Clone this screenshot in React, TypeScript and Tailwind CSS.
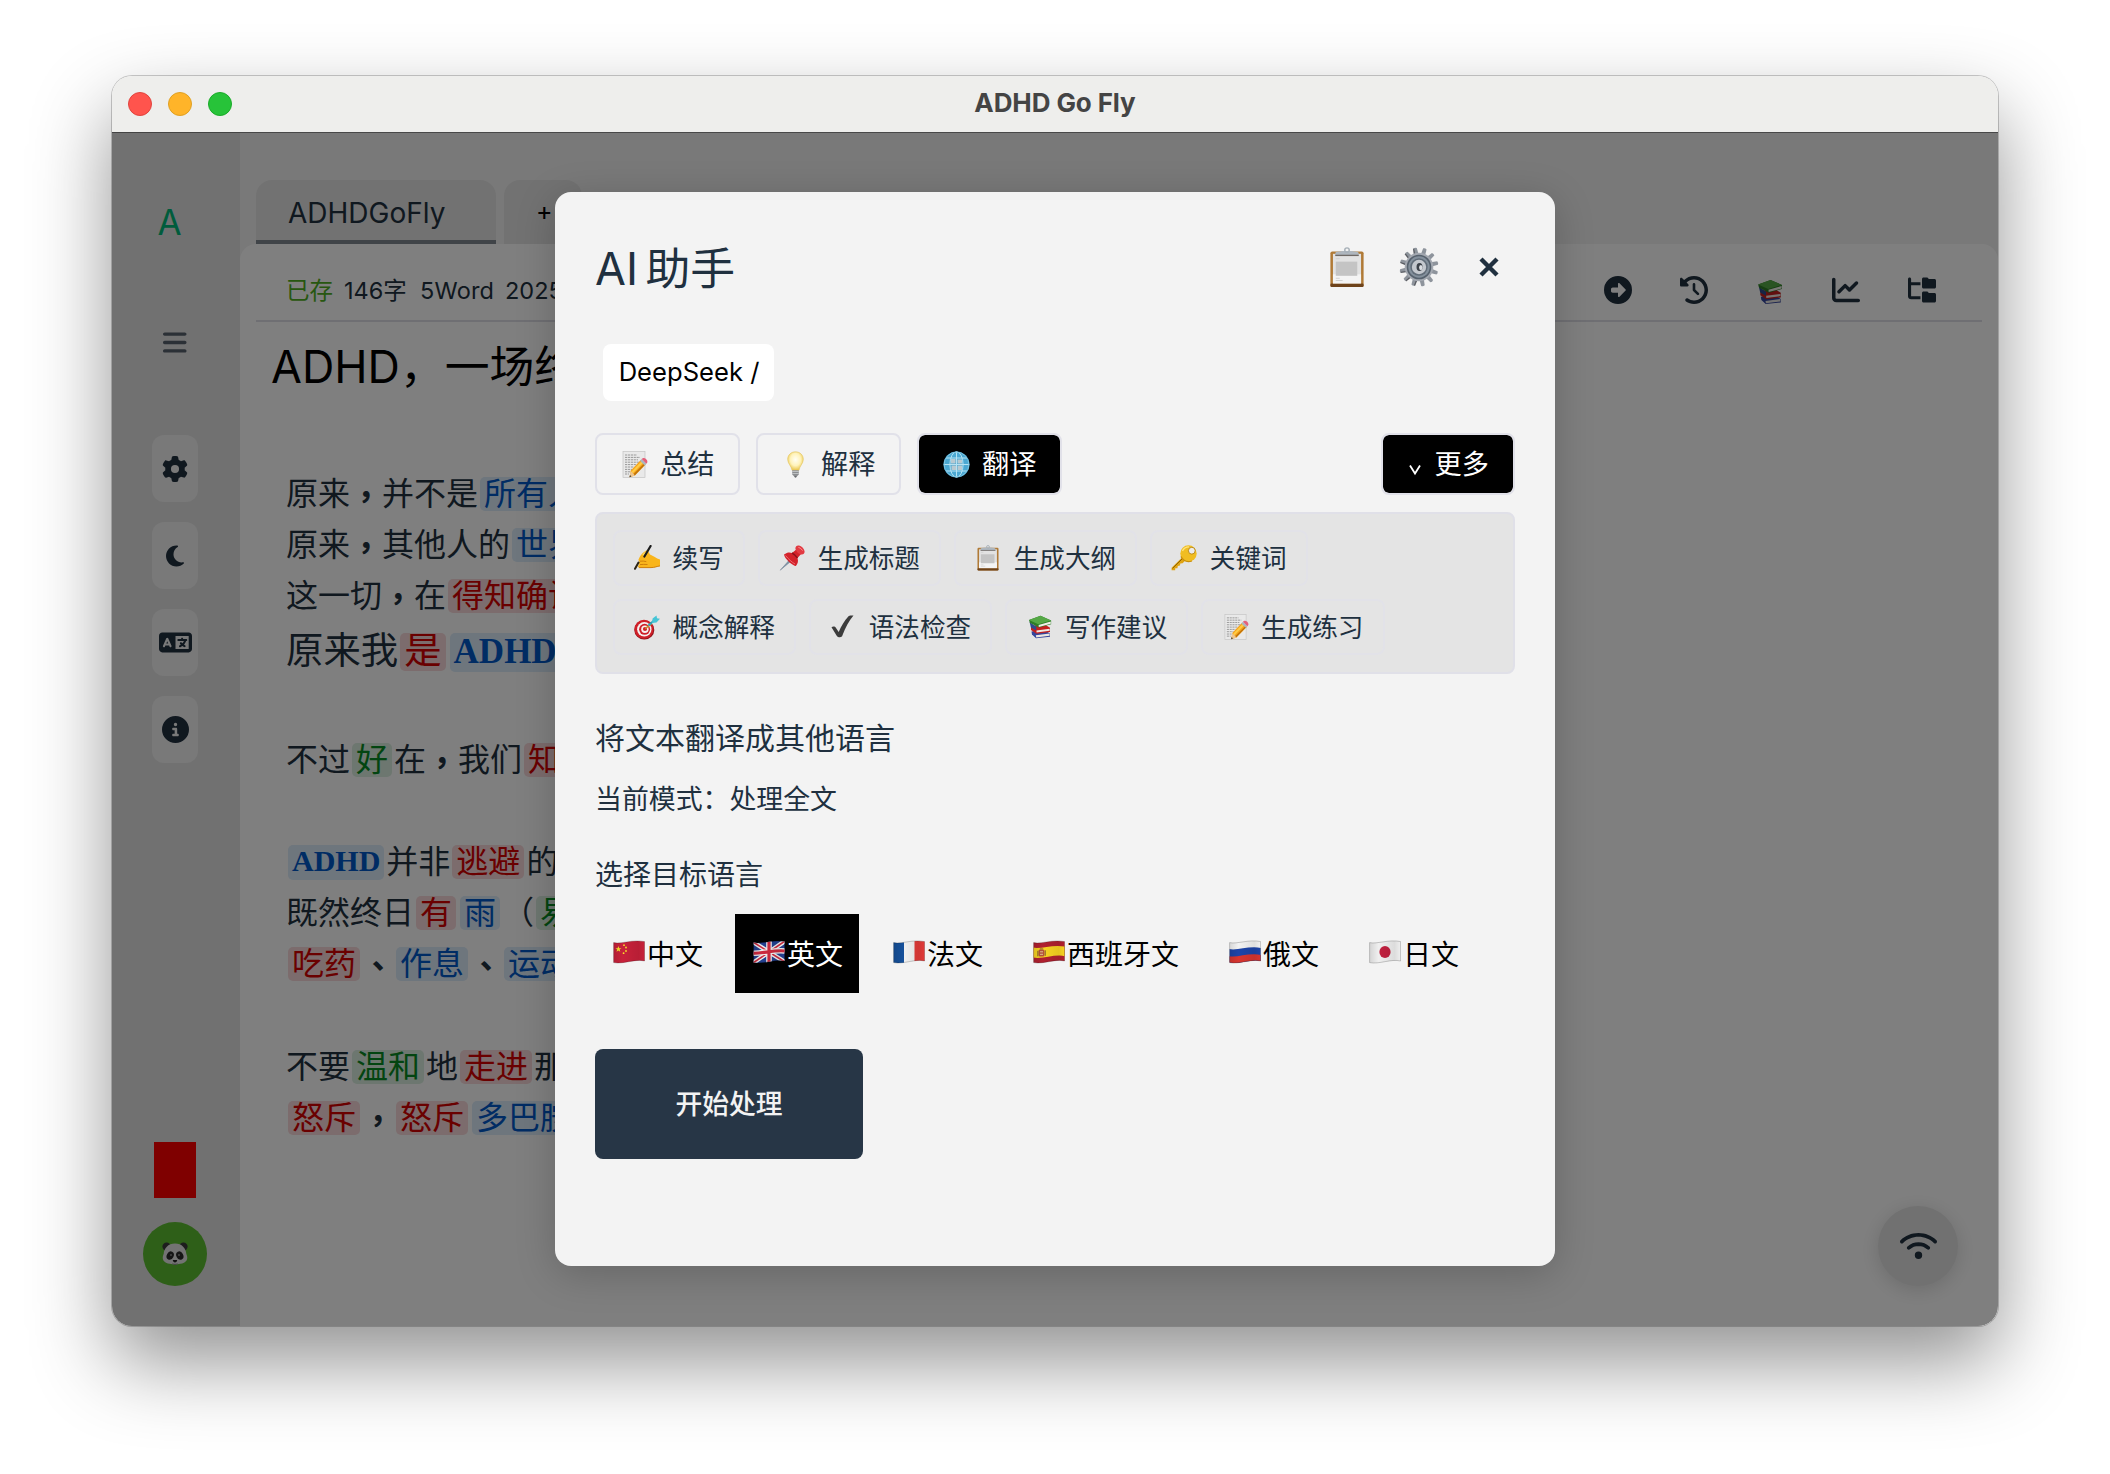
import React from "react";
import {
  FaBars,
  FaChartLine,
  FaCircleInfo,
  FaCircleRight,
  FaClockRotateLeft,
  FaFolderTree,
  FaGear,
  FaLanguage,
  FaMoon,
  FaWifi,
} from "react-icons/fa6";

type IconProps = { className?: string };

const MemoIcon = ({ className }: IconProps) => (
  <svg viewBox="0 0 27 27" className={className}>
    <rect x="2" y="0.6" width="22" height="25.8" fill="#e9e9e9" stroke="#c4c4c4" strokeWidth="0.7" />
    <path
      d="M4 4h12M4 6.4h15M4 8.8h13M4 11.2h15M4 13.6h11M4 16h9M4 18.4h7M4 20.8h5M4 23h4"
      stroke="#989898"
      strokeWidth="1"
      strokeDasharray="2.2 0.7"
    />
    <path d="M9.600 19.800 19.800 9l4.800 4.600-10.600 10.800-5.400 1.800z" fill="#f5a31a" />
    <path d="M10.600 20.600 20.800 9.900l1.600 1.500-10.700 11z" fill="#ffcb45" />
    <path d="m13.600 24.500 10.700-10.900-1.100-1-11 10.900z" fill="#c0720a" />
    <path d="m19 9.800 1.700-1.700 4.700 4.600-1.700 1.700z" fill="#aab6be" />
    <path d="m20.700 8.100 1-.8c2-1.200 5.600 2 4.500 4.200l-.8 1.200z" fill="#e4607a" />
    <path d="m9.600 19.800 4.400 4.600-5.400 1.800z" fill="#edc58f" />
    <path d="m9 24 1.300 1.500-1.900.8z" fill="#333" />
  </svg>
);

const BulbIcon = ({ className }: IconProps) => (
  <svg viewBox="0 0 27 27" className={className}>
    <defs>
      <radialGradient id="bulb-glass" cx="0.5" cy="0.42" r="0.55">
        <stop offset="0" stopColor="#fffef4" />
        <stop offset="0.6" stopColor="#fff3bb" />
        <stop offset="1" stopColor="#eccb58" />
      </radialGradient>
    </defs>
    <path
      d="M13.500.8c4.500 0 7.800 3.300 7.800 7.500 0 4.400-3.600 6.300-4.300 11H10c-.7-4.700-4.300-6.600-4.300-11C5.700 4.100 9 .8 13.500.8z"
      fill="url(#bulb-glass)"
      stroke="#e3c45e"
      strokeWidth="0.6"
    />
    <path d="M10.200 19.300h6.600v4.200l-1.800 1.800h-3l-1.800-1.800z" fill="#8b8d90" />
    <path d="M10.200 20.500h6.600M10.200 22.500h6.600" stroke="#c9cbce" strokeWidth="0.8" />
    <path d="M12 25.200h3l-1 1.300h-1z" fill="#45474a" />
  </svg>
);

const GlobeIcon = ({ className }: IconProps) => (
  <svg viewBox="0 0 27 27" className={className}>
    <circle cx="13.500" cy="13.500" r="13" fill="#3f9cc9" />
    <circle cx="13.500" cy="13.500" r="12" fill="#4ba8d2" />
    <path
      d="M8 8h4.500v4.500H8zM8.500 14.500h4.500v4.500H8.500zM14.500 8.500h4.500v4h-4.500zM14.500 14.500h4.500v4.500h-4.500z"
      fill="#c4ccd0"
      opacity="0.9"
    />
    <g fill="none" stroke="#b5e2f3" strokeWidth="1">
      <path d="M13.500.8v25.400M.8 13.500h25.400M3 7h21M3 20h21" />
      <ellipse cx="13.500" cy="13.500" rx="6.600" ry="12.700" />
      <circle cx="13.500" cy="13.500" r="12.400" stroke="#7fc6e2" />
    </g>
  </svg>
);

const ClipboardIcon = ({ className }: IconProps) => (
  <svg viewBox="0 0 36 42" className={className}>
    <rect x="1" y="4.500" width="34" height="36.500" rx="1.800" fill="#b07a36" />
    <rect x="1" y="37.500" width="34" height="3.500" rx="1.200" fill="#6e431b" />
    <rect x="3.600" y="7" width="28.800" height="30.300" fill="#e2e2e2" />
    <rect x="3.600" y="28" width="28.800" height="9.300" fill="#f4f4f4" />
    <rect x="6.500" y="15" width="22" height="14.500" fill="#c4c4c4" />
    <path d="M6.500 12h4M6.500 32h4M6.500 34.300h7" stroke="#cfcfcf" strokeWidth="1" />
    <path d="M6 6.500c0-2 3.500-1.800 7-2.500h10c3.500.7 7 .5 7 2.500V9H6z" fill="#aeb6be" />
    <path d="M6 8h24v1.300H6z" fill="#6f6a66" />
    <circle cx="18" cy="3.200" r="2.300" fill="none" stroke="#a7b0b8" strokeWidth="1.500" />
  </svg>
);

const GearEmoji = ({ className }: IconProps) => (
  <svg viewBox="0 0 40 40" className={className}>
    <g fill="#8e949c">
      {[0, 30, 60, 90, 120, 150, 180, 210, 240, 270, 300, 330].map((angle) => (
        <path key={angle} d="M17.800 7.500 18.200 1q1.800-1.200 3.600 0l.4 6.500z" transform={`rotate(${angle + 18} 20 20)`} />
      ))}
    </g>
    <g fill="#3d3f45" opacity="0.7">
      {[180, 210, 240, 270, 300, 330].map((angle) => (
        <path key={angle} d="M17.400 6.500 17.900.8l1.200.2-.3 6z" transform={`rotate(${angle + 18} 20 20)`} />
      ))}
    </g>
    <circle cx="20" cy="20" r="14.300" fill="#a3a8b0" />
    <circle cx="20" cy="20" r="12.300" fill="#56616d" />
    <circle cx="20" cy="20" r="10.700" fill="#84909c" />
    <circle cx="20" cy="20" r="8.700" fill="#616c78" />
    <circle cx="20" cy="20" r="7.200" fill="#c4c8ce" />
    <ellipse cx="20.500" cy="20" rx="3" ry="4" fill="#3d4249" />
    <ellipse cx="21.800" cy="20.600" rx="1.700" ry="2.600" fill="#dcdfe3" />
  </svg>
);

const WritingHandIcon = ({ className }: IconProps) => (
  <svg viewBox="0 0 26 26" className={className}>
    <path
      d="M4.500 14.500C6 11 9 6.500 13.500 5l2.500 4.500c3.500 1.200 6 4 10 5v6.500c-3 .6-5 2-9 1.800H5.500C3 22.500 4 20 6 19.600c-2.600 0-2.500-3-.2-3.400-1 0-1.500-.8-1.300-1.700z"
      fill="#f9b51b"
    />
    <path
      d="M6 19.600c2.500-.2 5-.4 7.500-.1M5.800 16.200c2.500-.3 4.500-.2 6.500.4M5 22.600h12c3.500 0 6-1.300 9-1.700"
      stroke="#c97908"
      strokeWidth="0.900"
      fill="none"
    />
    <path d="M9 10c2-2.500 4-3.800 5.500-3.500" stroke="#ffd95e" strokeWidth="1.600" fill="none" />
    <path d="m16.600 1-6.200 10.500" stroke="#1c1c1c" strokeWidth="2.200" strokeLinecap="round" />
    <path d="M4.500 17.500 1 23.800" stroke="#2c2416" strokeWidth="2" strokeLinecap="round" />
  </svg>
);

const PinIcon = ({ className }: IconProps) => (
  <svg viewBox="0 0 26 26" className={className}>
    <path d="m10.500 14.800 1.500 1.400L1.200 25.200z" fill="#8195a6" stroke="#6c7f90" strokeWidth="0.500" />
    <path
      d="M5 9.500c3-2.200 5.500-2.500 8-1.500l5.500-4.500 4.500 4.500-4.500 5c1 3 .5 5.500-1.600 8C14 21 5.500 14 5 9.500z"
      fill="#d3222b"
    />
    <path d="M13 8c2 1 4 3 5.500 5" stroke="#8d1119" strokeWidth="1.400" fill="none" />
    <ellipse cx="21" cy="5" rx="5.400" ry="3.600" transform="rotate(45 21 5)" fill="#e23a42" />
    <path d="M6.500 10.500c3 3.500 6 6.500 9.500 8.500" stroke="#f06a6f" strokeWidth="1" fill="none" />
    <path d="M19.500 2.500c1.500.3 3 1.500 4 3" stroke="#ff9a9a" strokeWidth="1" fill="none" />
  </svg>
);

const KeyIcon = ({ className }: IconProps) => (
  <svg viewBox="0 0 26 26" className={className}>
    <path d="M11.500 12 .6 22.700v2.500h3.600v-2h2.200l.4-2.300 2.200-.3.300-2.200 2.300-.2 3.500-3.400z" fill="#e0a412" />
    <path d="M1.500 23.400 12 13" stroke="#8a5f05" strokeWidth="1" />
    <circle cx="17.500" cy="8.500" r="8.200" fill="#f0bd22" />
    <path d="M10 11.500c2 4 6 6 11 4.500" stroke="#c98f0c" strokeWidth="1.300" fill="none" />
    <circle cx="20.800" cy="5.700" r="3.400" fill="#ececec" stroke="#b98509" strokeWidth="0.900" />
    <path d="M11.500 6C12.500 3.500 15 1.800 18 1.800" stroke="#ffe47c" strokeWidth="1.300" fill="none" />
  </svg>
);

const TargetIcon = ({ className }: IconProps) => (
  <svg viewBox="0 0 26 26" className={className}>
    <ellipse cx="10.300" cy="15.900" rx="10" ry="9.600" fill="#8f1219" />
    <circle cx="10" cy="15.200" r="9.500" fill="#cf2029" />
    <circle cx="10.300" cy="15.300" r="7.200" fill="#f5f1f0" />
    <circle cx="10.600" cy="15.300" r="5.500" fill="#cf2029" />
    <circle cx="10.900" cy="15.200" r="3.700" fill="#f5f1f0" />
    <circle cx="11" cy="15" r="2.100" fill="#cf2029" />
    <path d="m11.300 14.600 6.500-5.300" stroke="#c98d2b" strokeWidth="1.500" />
    <path d="m14.500 11.500 6-5.500" stroke="#2aa5b8" strokeWidth="2" />
    <path d="m18 9 .6-4.500L22.500 1.500l.5 2.700 3 .6-3.500 3.700z" fill="#46c5d6" />
  </svg>
);

const CheckIcon = ({ className }: IconProps) => (
  <svg viewBox="0 0 26 26" className={className}>
    <path
      d="M1.500 13.200c1.500-1 3.600-.8 4.500.7l2.700 4c2.700-6 5.800-11.500 9.600-15.500.7-.8 1.700-1 2.800-1l2.400.2c-4.500 5.600-8.200 12-11 19.700-.5 1.500-1.300 1.900-2.600 1.900s-2.500-.1-3.200-1.500z"
      fill="#3c3c3c"
    />
  </svg>
);

const BooksIcon = ({ className }: IconProps) => (
  <svg viewBox="0 0 26 26" className={className}>
    <path d="m4.500 17.500 12-2 6.500 4v3.200L9 24.200 5 20.500z" fill="#34459c" />
    <path d="m8.800 21.300 13.800-1.800v2.300l-13.400 1.700z" fill="#e9e6e2" />
    <path d="m4 12 13-2 6 3.700v4.300L9.500 19.800 4 16z" fill="#c4201f" />
    <path d="m9.400 16.400 13.300-1.600v2l-13.100 1.700z" fill="#efe9e3" />
    <path d="m2.600 8 1.300 5.500 5.400 3v-3.700z" fill="#2d4a8d" />
    <path d="m2 6 11.500-4.200 10.600 4.600v3.800l-12.300 3.400-9-4.800z" fill="#2d7d27" />
    <path d="m2 6 11.500-4.200 10.600 4.600-12.800 3.900z" fill="#55a846" />
    <path d="m11.600 11 12.200-3.500v2.200l-12 3.300z" fill="#f1eee9" />
  </svg>
);

const PandaIcon = ({ className }: IconProps) => (
  <svg viewBox="0 0 26 24" className={className}>
    <circle cx="4.600" cy="4.600" r="4.200" fill="#3b3b3b" />
    <circle cx="21.400" cy="4.600" r="4.200" fill="#3b3b3b" />
    <path
      d="M13 1.500c7 0 11 5 11.300 10.300 2 4.500.8 7.500-2.300 9-2.500 1.200-5 1.200-6.500 1.500-1.600.8-3.400.8-5 0-1.500-.3-4-.3-6.500-1.500-3.100-1.500-4.300-4.500-2.300-9C2 6.500 6 1.500 13 1.500z"
      fill="#e6e6e6"
    />
    <ellipse cx="8.200" cy="13.600" rx="3.400" ry="4.300" transform="rotate(28 8.200 13.600)" fill="#2b2b2b" />
    <ellipse cx="17.800" cy="13.600" rx="3.400" ry="4.300" transform="rotate(-28 17.800 13.600)" fill="#2b2b2b" />
    <circle cx="9" cy="13" r="1" fill="#8d8d8d" />
    <circle cx="17" cy="13" r="1" fill="#8d8d8d" />
    <path d="M10.800 18h4.400c0 1.600-1.200 2.400-2.200 2.400s-2.200-.8-2.200-2.400z" fill="#222" />
    <path d="M10.500 21.800c1.500.8 3.500.8 5 0" stroke="#666" strokeWidth="0.800" fill="none" />
  </svg>
);

const flagShape = "M.6 2.600C8 4.400 20-1 31.600 1.600V21C22 18.600 10 24.600.6 22.600z";

const Flag = ({ id, children }: { id: string; children: React.ReactNode }) => (
  <svg viewBox="0 0 32 24" className="h-6 w-8">
    <defs>
      <clipPath id={`flag-${id}`}>
        <path d={flagShape} />
      </clipPath>
      <linearGradient id={`flag-shade-${id}`}>
        <stop offset="0" stopColor="#000" stopOpacity="0.12" />
        <stop offset="0.3" stopColor="#000" stopOpacity="0" />
        <stop offset="0.8" stopColor="#000" stopOpacity="0.08" />
        <stop offset="1" stopColor="#000" stopOpacity="0" />
      </linearGradient>
    </defs>
    <g clipPath={`url(#flag-${id})`}>
      {children}
      <path d="M0 0h32v24H0z" fill={`url(#flag-shade-${id})`} />
    </g>
    <path d={flagShape} fill="none" stroke="#000" strokeOpacity="0.22" strokeWidth="0.900" />
  </svg>
);

const star = "M0-1 .25-.31.95-.31.38.12.59.81 0 .4-.59.81-.38.12-.95-.31-.25-.31z";

const flags: Record<string, React.ReactNode> = {
  cn: (
    <Flag id="cn">
      <path d="M0 0h32v24H0z" fill="#c8213a" />
      <g fill="#f9e12a">
        <path d={star} transform="translate(5.400 9.200) scale(3.200)" />
        <circle cx="11" cy="5.200" r="0.900" />
        <circle cx="13" cy="7.500" r="0.900" />
        <circle cx="13" cy="11" r="0.900" />
        <circle cx="10.600" cy="13.200" r="0.900" />
      </g>
    </Flag>
  ),
  gb: (
    <Flag id="gb">
      <path d="M0 0h32v24H0z" fill="#23408f" />
      <path d="m0 2 32 20M0 23 32 1" stroke="#f0f0f0" strokeWidth="4.400" />
      <path d="m0 2 32 20M0 23 32 1" stroke="#cc2a3f" strokeWidth="1.600" />
      <path d="M16 0v24M0 13.200C8 14 22 9.500 32 11" stroke="#f0f0f0" strokeWidth="5.600" fill="none" />
      <path d="M16 0v24M0 13.200C8 14 22 9.500 32 11" stroke="#cc2a3f" strokeWidth="3.200" fill="none" />
    </Flag>
  ),
  fr: (
    <Flag id="fr">
      <path d="M0 0h11v24H0z" fill="#15509a" />
      <path d="M11 0h10.500v24H11z" fill="#f2f2f2" />
      <path d="M21.500 0H32v24H21.500z" fill="#e23a38" />
    </Flag>
  ),
  es: (
    <Flag id="es">
      <path d="M0 0h32v24H0z" fill="#b0202f" />
      <path d="M0 7.600C8 9.400 20 4 32 6.600v9.600C22 13.800 10 19.400 0 17.600z" fill="#f8d321" />
      <rect x="5.500" y="9.600" width="6" height="7" rx="1.500" fill="#b4513a" />
      <path d="M4.800 10.800v5.500M12.300 10.300v5.500M6.800 8.900h3.400" stroke="#8d6a2c" strokeWidth="1" />
      <path d="M7 11.800h3M7 14.300h3" stroke="#e9cfa0" strokeWidth="0.900" />
    </Flag>
  ),
  ru: (
    <Flag id="ru">
      <path d="M0 0h32v24H0z" fill="#f2f2f2" />
      <path d="M0 9C8 11 20 5.500 32 8v16H0z" fill="#1d44a8" />
      <path d="M0 16.200C8 18 20 12.500 32 15v9H0z" fill="#d8352f" />
    </Flag>
  ),
  jp: (
    <Flag id="jp">
      <path d="M0 0h32v24H0z" fill="#efefef" />
      <ellipse cx="16" cy="12" rx="5.600" ry="6" fill="#c0203f" />
    </Flag>
  ),
};

const sideButtons = [
  { name: "settings", icon: <FaGear className="size-[26px]" /> },
  { name: "theme", icon: <FaMoon className="size-6" /> },
  { name: "language", icon: <FaLanguage className="h-[27px] w-[33px]" /> },
  { name: "about", icon: <FaCircleInfo className="size-[27px]" /> },
];

const toolbarIcons = [
  { name: "next", icon: <FaCircleRight className="size-7" /> },
  { name: "history", icon: <FaClockRotateLeft className="size-7" /> },
  { name: "library", icon: <BooksIcon className="mt-1 size-[28px]" /> },
  { name: "stats", icon: <FaChartLine className="size-7" /> },
  { name: "tree", icon: <FaFolderTree className="size-7" /> },
];

type Tone = "plain" | "punct" | "blue" | "red" | "green";
type Segment = [Tone, string];

const toneClass: Record<Tone, string> = {
  plain: "",
  punct: "font-['Noto_Sans_CJK_TC'] font-bold",
  blue: "mx-[2px] rounded-[5px] bg-[#dcecfb] px-1 text-[#0058c8]",
  red: "mx-[2px] rounded-[5px] bg-[#f8d9da] px-1 text-[#d40000]",
  green: "mx-[2px] rounded-[5px] bg-[#dbeee0] px-1 text-[#078a22]",
};

const documentLines: Segment[][] = [
  [["plain", "原来"], ["punct", "，"], ["plain", "并不是"], ["blue", "所有人"]],
  [["plain", "原来"], ["punct", "，"], ["plain", "其他人的"], ["blue", "世界"]],
  [["plain", "这一切"], ["punct", "，"], ["plain", "在"], ["red", "得知确诊"]],
  [["plain", "原来我"], ["red", "是"], ["blue", "ADHD"]],
  [],
  [["plain", "不过"], ["green", "好"], ["plain", "在"], ["punct", "，"], ["plain", "我们"], ["red", "知道"]],
  [],
  [["blue", "ADHD"], ["plain", "并非"], ["red", "逃避"], ["plain", "的"]],
  [["plain", "既然终日"], ["red", "有"], ["blue", "雨"], ["plain", "（"], ["green", "易"]],
  [["red", "吃药"], ["punct", "、"], ["blue", "作息"], ["punct", "、"], ["blue", "运动"]],
  [],
  [["plain", "不要"], ["green", "温和"], ["plain", "地"], ["red", "走进"], ["plain", "那"]],
  [["red", "怒斥"], ["punct", "，"], ["red", "怒斥"], ["blue", "多巴胺"]],
];

const emojiSize = "size-[26px] shrink-0";

const moreRows = [
  [
    { label: "续写", icon: <WritingHandIcon className={emojiSize} /> },
    { label: "生成标题", icon: <PinIcon className={emojiSize} /> },
    { label: "生成大纲", icon: <ClipboardIcon className={emojiSize} /> },
    { label: "关键词", icon: <KeyIcon className={emojiSize} /> },
  ],
  [
    { label: "概念解释", icon: <TargetIcon className={emojiSize} /> },
    { label: "语法检查", icon: <CheckIcon className={emojiSize} /> },
    { label: "写作建议", icon: <BooksIcon className={emojiSize} /> },
    { label: "生成练习", icon: <MemoIcon className={emojiSize} /> },
  ],
];

const languages = [
  { code: "cn", label: "中文" },
  { code: "gb", label: "英文", active: true },
  { code: "fr", label: "法文" },
  { code: "es", label: "西班牙文" },
  { code: "ru", label: "俄文" },
  { code: "jp", label: "日文" },
];

function TitleBar() {
  return (
    <div className="relative flex h-14 shrink-0 items-center justify-center bg-[#eeeeec]">
      <div className="absolute left-4 flex gap-4">
        <span className="size-6 rounded-full border border-[#e0443e] bg-[#ff544d]" />
        <span className="size-6 rounded-full border border-[#dfa023] bg-[#ffb429]" />
        <span className="size-6 rounded-full border border-[#1aab29] bg-[#27c339]" />
      </div>
      <h1 className="pb-[3px] text-[26px] font-bold tracking-[-0.1px] text-[#444444]">ADHD Go Fly</h1>
    </div>
  );
}

function Sidebar() {
  return (
    <aside className="flex w-32 shrink-0 flex-col items-center bg-[#e2e2e2] pb-10 pr-[2px] text-[#20303f]">
      <div className="mt-[68px] h-[44px] pr-[11px] text-[35px] leading-[44px] text-[#00b878]">A</div>
      <FaBars className="mt-[85px] h-[27px] w-[23.500px] text-[#56606c]" />
      <div className="mt-[79px] flex flex-col gap-5">
        {sideButtons.map((button) => (
          <button key={button.name} className="flex h-[67px] w-[46px] items-center justify-center rounded-xl bg-[#f2f2f2]">
            {button.icon}
          </button>
        ))}
      </div>
      <div className="mt-auto h-14 w-[42px] bg-[#ff0000]" />
      <div className="mt-6 flex size-16 items-center justify-center rounded-full bg-[#5cbe30]">
        <PandaIcon className="h-6 w-[26px]" />
      </div>
    </aside>
  );
}

function Editor() {
  return (
    <main className="flex min-w-0 flex-1 flex-col bg-[#f2f2f2] pt-12">
      <div className="flex h-16 gap-2 pl-4">
        <div className="w-60 rounded-t-2xl border-b-4 border-[#808890] bg-[#e4e4e4] pl-8 text-[28px] leading-[66px] text-[#20303f]">
          ADHDGoFly
        </div>
        <div className="w-[78px] rounded-t-2xl bg-[#e4e4e4] pl-8 text-[25px] leading-[62px] text-black">+</div>
      </div>
      <section className="flex-1 rounded-t-2xl bg-white px-4">
        <div className="flex h-[78px] items-center border-b-2 border-[#dfdfe6] pr-[46px] pt-4 text-[#20303f]">
          <div className="flex whitespace-nowrap pl-[30px] pt-px text-[23.500px] leading-8">
            <span className="w-[58px] text-[#4fae22]">已存</span>
            <span className="w-[76px]">146字</span>
            <span className="w-[85px] tracking-[0.200px]">5Word</span>
            <span>2025</span>
          </div>
          <div className="ml-auto flex gap-12">
            {toolbarIcons.map((item) => (
              <span key={item.name} className="flex size-7 items-center justify-center">
                {item.icon}
              </span>
            ))}
          </div>
        </div>
        <h2 className="mt-[13px] h-16 whitespace-nowrap pl-[15px] text-[44.800px] leading-[64px] text-black">
          <span className="inline-block w-[129px]">ADHD</span>，一场终身
        </h2>
        <div className="mt-[69px] whitespace-nowrap pl-[30px] font-['Liberation_Serif','Noto_Sans_CJK_SC',serif] text-[#20303f]">
          {documentLines.map((segments, lineIndex) => {
            const large = lineIndex === 3;
            return (
              <div
                key={lineIndex}
                className={
                  large
                    ? "flex h-[61.400px] items-center text-[37.400px] leading-[38px]"
                    : "flex h-[51.200px] items-center text-[32px] leading-[34px]"
                }
              >
                {segments.map(([tone, text], index) => (
                  <span key={index} className={toneClass[tone]}>
                    {text === "ADHD" ? (
                      <b className={large ? "relative -top-px text-[35px]" : "relative -top-[2px] text-[30px]"}>{text}</b>
                    ) : (
                      text
                    )}
                  </span>
                ))}
              </div>
            );
          })}
        </div>
      </section>
    </main>
  );
}

function AssistantDialog() {
  const tab = "flex h-[62.400px] items-center gap-3 rounded-lg border-2 border-[#e1e1e9] px-6 text-[27.200px]";
  return (
    <div className="h-[1074px] w-[1000px] rounded-2xl bg-[#f3f3f3] p-10 text-[#20303f] shadow-[0_8px_40px_rgba(0,0,0,0.2)]">
      <header className="flex h-[70px] items-center pr-4">
        <h2 className="pt-[5px] text-[44.800px] leading-none">
          AI <span className="-ml-[5px]">助手</span>
        </h2>
        <ClipboardIcon className="ml-auto h-[41px] w-9" />
        <GearEmoji className="ml-[34px] size-10" />
        <svg viewBox="0 0 20 20" className="ml-[40px] size-5">
          <path d="m2 2 16 16M18 2 2 18" stroke="#20303f" strokeWidth="4.400" />
        </svg>
      </header>

      <div className="ml-2 mt-[42px] flex h-[57px] w-[171px] items-center justify-center rounded-lg bg-white pl-px text-[25.600px] text-black">
        DeepSeek /
      </div>

      <div className="mt-8 flex gap-[15.600px]">
        <button className={tab}>
          <MemoIcon className="size-[27px]" />
          <span className="pt-[2px]">总结</span>
        </button>
        <button className={tab}>
          <BulbIcon className="size-[27px]" />
          <span className="pt-[2px]">解释</span>
        </button>
        <button className={`${tab} bg-black bg-clip-padding text-white`}>
          <GlobeIcon className="size-[27px]" />
          <span className="pt-[2px]">翻译</span>
        </button>
        <button className={`${tab} ml-auto bg-black bg-clip-padding text-white`}>
          <svg viewBox="0 0 16 16" className="mt-3 size-4">
            <path d="m3 3.500 5 8 5-8" fill="none" stroke="white" strokeWidth="1.800" />
          </svg>
          <span className="pt-[2px]">更多</span>
        </button>
      </div>

      <div className="mt-[16.600px] flex h-[162px] flex-col gap-[13px] rounded-lg border-2 border-[#e0e0e8] bg-[#e4e4e4] p-4">
        {moreRows.map((row, rowIndex) => (
          <div key={rowIndex} className="flex gap-[13px]">
            {row.map((item) => (
              <button
                key={item.label}
                className="flex h-14 items-center gap-[12.400px] rounded-lg border-2 border-[#e2e2e8] px-[19.200px] text-[25.600px]"
              >
                {item.icon}
                <span className="pt-[2px]">{item.label}</span>
              </button>
            ))}
          </div>
        ))}
      </div>

      <p className="mt-11 h-[41px] text-[30px] leading-[41px]">将文本翻译成其他语言</p>
      <p className="mt-[23px] h-[34px] text-[26.900px] leading-[34px]">当前模式：处理全文</p>
      <p className="mt-[42px] h-[34px] text-[28px] leading-[34px]">选择目标语言</p>

      <div className="mt-[22px] flex gap-4 text-black">
        {languages.map((language) => (
          <button
            key={language.code}
            className={
              language.active
                ? "flex h-[79px] items-center bg-black px-4 text-[28px] text-white"
                : "flex h-[79px] items-center px-4 text-[28px]"
            }
          >
            <span className="flex w-9 justify-center pb-[3px]">{flags[language.code]}</span>
            <span className="pt-[3px]">{language.label}</span>
          </button>
        ))}
      </div>

      <button className="mt-14 flex h-[110px] w-[268px] items-center justify-center rounded-lg bg-[#273646] text-[26.800px] font-medium text-[#f3f3f3]">
        开始处理
      </button>
    </div>
  );
}

export default function App() {
  return (
    <div className="h-[1474px] w-[2110px] overflow-hidden bg-white px-28 pt-[76px] font-['Inter','Noto_Sans_CJK_SC',sans-serif]">
      <div className="flex h-[1250px] w-[1886px] flex-col overflow-hidden rounded-[20px] shadow-[0_0_0_1px_rgba(0,0,0,0.2),0_36px_80px_rgba(0,0,0,0.43)]">
        <TitleBar />
        <div className="relative flex min-h-0 flex-1">
          <Sidebar />
          <Editor />
          <button className="absolute bottom-10 right-10 flex size-20 items-center justify-center rounded-full bg-[#e2e2e2] text-[#20303f] shadow-[0_4px_20px_rgba(0,0,0,0.15)]">
            <FaWifi className="h-[30px] w-[37px]" />
          </button>
          <div className="absolute inset-0 flex items-center justify-center bg-black/50 shadow-[inset_0_1px_0_rgba(0,0,0,0.4)]">
            <AssistantDialog />
          </div>
        </div>
      </div>
    </div>
  );
}
